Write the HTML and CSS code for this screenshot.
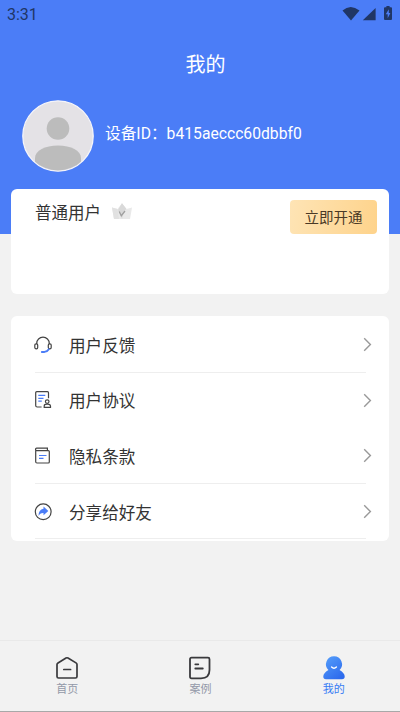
FILE: index.html
```html
<!DOCTYPE html>
<html lang="zh-CN">
<head>
<meta charset="utf-8">
<title>我的</title>
<link rel="stylesheet" href="styles.css">
</head>
<body>
<div class="app">
  <header class="header">
    <div class="status">
      <span class="time">3:31</span>
      <svg class="status-icons" width="52" height="18" viewBox="0 0 52 18" fill="#203666">
        <path d="M.5 5.500Q8.500-1.500 17.500 5.500L9 15.600Z"/>
        <path d="M33.600 3V15.200H20.800Z"/>
        <path d="M43 2.200h1.400V1h3.200v1.200H49a1 1 0 0 1 1 1V14a1 1 0 0 1-1 1h-6a1 1 0 0 1-1-1V3.200a1 1 0 0 1 1-1Z"/>
        <path d="M46.800 4.200L43.800 9.300h1.900v4L48.400 8h-1.600Z" fill="#4b7df7"/>
      </svg>
    </div>
    <h1 class="title">我的</h1>
    <div class="profile">
      <svg class="avatar" width="72" height="72" viewBox="0 0 72 72">
        <defs><clipPath id="face"><circle cx="36" cy="36" r="34.500"/></clipPath></defs>
        <circle cx="36" cy="36" r="35.200" fill="#e4e2e6" stroke="#f5f5fa" stroke-width="1.300"/>
        <g clip-path="url(#face)" fill="#bcbcbc">
          <circle cx="36" cy="28.500" r="11.300"/>
          <path d="M13 72V58C13 50.500 23 45.500 36 45.500S59 50.500 59 58V72Z"/>
        </g>
      </svg>
      <span class="device">设备ID：b415aeccc60dbbf0</span>
    </div>
  </header>

  <section class="card member">
    <span class="level">普通用户</span>
    <svg class="crown" width="22" height="18" viewBox="0 0 22 18">
      <path d="M1 5.500L6.500 7 11 1.200 15.500 7 21 5.500 19 17H3Z" fill="#e9e9e9"/>
      <path d="M11 1.200L6.500 7 8 17H3L1 5.500 6.500 7Z" fill="#e1e1e1"/>
      <path d="M11 1.200L15.500 7 13 9 11 17 7 8Z" fill="#d9d9d9"/>
      <path d="M8.200 9.500L10.300 13.700 14 9" fill="none" stroke="#a0a0a0" stroke-width="1.300"/>
    </svg>
    <button class="open">立即开通</button>
  </section>

  <nav class="card menu">
    <a class="row">
      <svg class="icon" width="18" height="18" viewBox="0 0 18 18" fill="none" stroke="#444" stroke-width="1.200">
        <path d="M2.700 8V7.500a6.300 6.300 0 0 1 12.600 0V8"/>
        <rect x=".8" y="7.800" width="2.900" height="5" rx="1.300"/>
        <rect x="14.300" y="7.800" width="2.900" height="5" rx="1.300"/>
        <path d="M14.800 13.200Q13.500 15.500 10.500 15.900M7.800 16H10.300" stroke="#4b7df7" stroke-width="1.800" stroke-linecap="round"/>
      </svg>
      <span class="label">用户反馈</span>
      <svg class="arrow" width="9" height="15" viewBox="0 0 9 15"><path d="M1.200 1.300L7.400 7.500 1.200 13.700"/></svg>
    </a>
    <a class="row faint">
      <svg class="icon" width="18" height="18" viewBox="0 0 18 18" fill="none" stroke="#444" stroke-width="1.200">
        <path d="M7.600 16H3.200a1.500 1.500 0 0 1-1.500-1.500V1.700a1 1 0 0 1 1-1H13.500a1 1 0 0 1 1 1V7.200"/>
        <path d="M4.300 4.400h7M4.300 7.300h5.200M4.300 10.200h3.500" stroke="#4b7df7"/>
        <circle cx="13.200" cy="10.600" r="1.800"/>
        <path d="M10.200 16.300V15q0-1.800 3-1.800T16.500 15v1.300Z"/>
      </svg>
      <span class="label">用户协议</span>
      <svg class="arrow" width="9" height="15" viewBox="0 0 9 15"><path d="M1.200 1.300L7.400 7.500 1.200 13.700"/></svg>
    </a>
    <a class="row">
      <svg class="icon" width="18" height="18" viewBox="0 0 18 18" fill="none" stroke="#444" stroke-width="1.200">
        <path d="M1.700 2.500V14.800a1.200 1.200 0 0 0 1.200 1.200H14.300a1 1 0 0 0 1-1V4.600a1 1 0 0 0-1-1H2.700a1 1 0 0 1 0-2.400H13.400V3.500"/>
        <path d="M5 8.500h7.500M5 11.300h4.500" stroke="#4b7df7"/>
      </svg>
      <span class="label">隐私条款</span>
      <svg class="arrow" width="9" height="15" viewBox="0 0 9 15"><path d="M1.200 1.300L7.400 7.500 1.200 13.700"/></svg>
    </a>
    <a class="row">
      <svg class="icon" width="18" height="18" viewBox="0 0 18 18">
        <circle cx="9.200" cy="8.800" r="7.900" fill="none" stroke="#444" stroke-width="1.200"/>
        <path d="M9.500 3.500L14.300 7.900 9.500 12.200V10Q6 9.800 4.500 13 4.500 6.500 9.500 5.800Z" fill="#4b7df7"/>
      </svg>
      <span class="label">分享给好友</span>
      <svg class="arrow" width="9" height="15" viewBox="0 0 9 15"><path d="M1.200 1.300L7.400 7.500 1.200 13.700"/></svg>
    </a>
  </nav>

  <footer class="tabs">
    <a class="tab">
      <svg width="24" height="24" viewBox="0 0 24 24" fill="none" stroke="#3a3a3d" stroke-width="1.700" stroke-linecap="round" stroke-linejoin="round">
        <path d="M2 8.500Q2 7.500 3 6.900L11 2Q12 1.500 13 2L21 6.900Q22 7.500 22 8.500V20.500Q22 22 20.500 22H3.500Q2 22 2 20.500Z"/>
        <path d="M8.800 13.500h6.800"/>
      </svg>
      <span>首页</span>
    </a>
    <a class="tab">
      <svg width="24" height="24" viewBox="0 0 24 24" fill="none" stroke="#3a3a3d" stroke-width="1.800" stroke-linecap="round" stroke-linejoin="round">
        <path d="M3.500 1.700H20Q21.500 1.700 21.500 3.200V14Q21.500 22.300 13 22.300H3.500Q2 22.300 2 20.800V3.200Q2 1.700 3.500 1.700Z"/>
        <path d="M7.300 8.300h3M7.300 12.500h7.500"/>
      </svg>
      <span>案例</span>
    </a>
    <a class="tab active">
      <svg width="24" height="24" viewBox="0 0 24 24">
        <defs><linearGradient id="person" x1="0" y1="0" x2=".7" y2="1"><stop offset="0" stop-color="#56a0fb"/><stop offset="1" stop-color="#2e6bed"/></linearGradient></defs>
        <path d="M12 .3a8 8 0 0 1 5.600 13.700Q22.700 17.200 22.700 20.500 22.700 23.200 20 23.200H4Q1.300 23.200 1.300 20.500 1.300 17.200 6.400 14A8 8 0 0 1 12 .3Z" fill="url(#person)"/>
        <path d="M9.600 11Q12 13.300 14.400 11" fill="none" stroke="#fff" stroke-width="1.400" stroke-linecap="round"/>
      </svg>
      <span>我的</span>
    </a>
  </footer>
</div>
</body>
</html>
```

FILE: styles.css
```css
* { box-sizing: border-box; }
body {
  margin: 0;
  background: #f2f2f2;
  font-family: Roboto, "Noto Sans CJK SC", sans-serif;
  color: #333;
}
.app {
  display: flex;
  flex-direction: column;
  height: 712px;
  overflow: hidden;
  border-bottom: 1px solid #a8a8a8;
}
.header {
  flex: none;
  height: 233.5px;
  background: #4b7df7;
  color: #fff;
}
.status {
  display: flex;
  justify-content: space-between;
  height: 28px;
  padding: 5px 6px 0 7px;
}
.time {
  font-size: 16px;
  line-height: 19px;
  color: #203666;
}
.title {
  margin: 21px 0 0;
  padding-left: 11px;
  font-size: 20px;
  font-weight: 400;
  line-height: 32px;
  text-align: center;
}
.profile {
  display: flex;
  align-items: center;
  gap: 11px;
  margin-top: 19px;
  padding-left: 22px;
}
.device {
  font-size: 15.7px;
  line-height: 24px;
  margin-top: -4px;
}
.card {
  flex: none;
  margin: 0 11px;
  background: #fff;
  border-radius: 6px;
}
.member {
  display: flex;
  align-items: flex-start;
  height: 105px;
  margin-top: -44.5px;
  padding: 11px 12px 0 24px;
}
.level {
  padding-top: 1px;
  font-size: 16.5px;
  line-height: 25px;
}
.crown { margin: 2px 0 0 10px; }
.open {
  width: 87px;
  height: 34px;
  margin-left: auto;
  padding: 3px 0 0;
  border: 0;
  border-radius: 4px;
  background: linear-gradient(100deg, #fee4b5, #fed38b);
  color: #4a3a26;
  font: 14.5px/31px Roboto, "Noto Sans CJK SC", sans-serif;
}
.menu {
  height: 225px;
  margin-top: 22px;
  padding: 1px 17px 0 23px;
}
.row {
  display: flex;
  align-items: center;
  height: 55.6px;
  background: linear-gradient(#eee, #eee) 1px 100% / calc(100% - 7px) 1px no-repeat;
}
.faint { background: none; }
.label {
  margin-left: 17px;
  padding-top: 4px;
  font-size: 16.6px;
  line-height: 24px;
}
.arrow {
  margin-left: auto;
  fill: none;
  stroke: #999;
  stroke-width: 1.4;
}
.tabs {
  display: flex;
  height: 71px;
  margin-top: auto;
  border-top: 1px solid #e9e9e9;
}
.tab {
  flex: 1;
  display: flex;
  flex-direction: column;
  align-items: center;
  gap: 2px;
  padding: 15px 0 0 1px;
  font-size: 11px;
  line-height: 16px;
  color: #9398a8;
}
.active { color: #367bf5; }
```
